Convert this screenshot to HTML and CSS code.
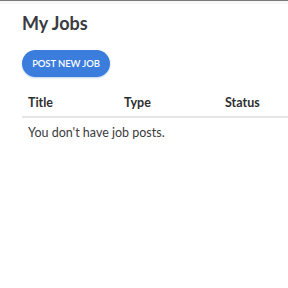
FILE: index.html
```html
<!DOCTYPE html>
<html>
<head>
<meta charset="utf-8">
<link rel="stylesheet" href="styles.css">
</head>
<body>
<div class="topbar"></div>
<main class="page">
  <h1 class="title">My Jobs</h1>
  <button class="btn">POST NEW JOB</button>
  <div class="table">
    <div class="thead">
      <div class="th">Title</div>
      <div class="th">Type</div>
      <div class="th">Status</div>
    </div>
    <div class="empty">You don't have job posts.</div>
  </div>
</main>
</body>
</html>
```
FILE: styles.css
```css
html, body { margin: 0; padding: 0; background: #fff; }
body { font-family: Lato, "Noto Sans", sans-serif; color: #3a3b3d; }
.topbar { height: 1px; background: #7a7a7a; border-bottom: 3px solid #f8f8f8; }
.page { padding: 6px 0 0 22px; }
.title { margin: 0; font-size: 18px; font-weight: 700; line-height: 26px; color: #3a3b3f; }
.btn {
  margin-top: 14px; height: 27px; width: 88px; border: 0; border-radius: 14px;
  background: #3b7ddd; color: #fff; font-family: Lato, sans-serif; font-size: 9.5px;
  font-weight: 600; letter-spacing: -0.1px; padding: 0; display: block;
  box-shadow: 0 1px 2px rgba(59, 125, 221, 0.35);
}
.table { margin-top: 13px; }
.thead { display: grid; grid-template-columns: 96px 101px 1fr; border-bottom: 2px solid #e6e6e6; padding: 5px 0 6px; }
.th { padding-left: 6px; font-size: 12.5px; font-weight: 700; line-height: 15px; color: #2e2f31; }
.empty { padding: 7px 0 0 6px; font-size: 12.5px; line-height: 16px; color: #3a3b3d; }
```
